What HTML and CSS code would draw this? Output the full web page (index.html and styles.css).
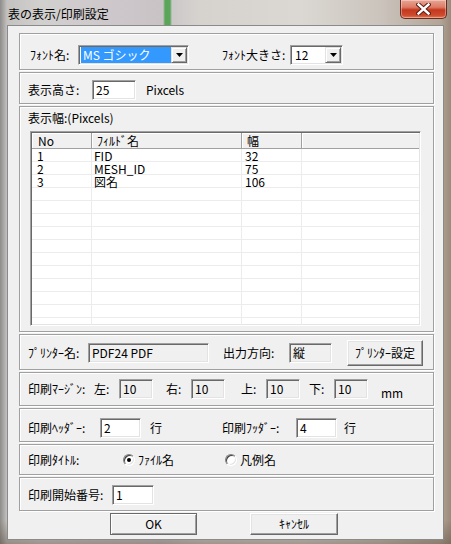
FILE: index.html
```html
<!DOCTYPE html>
<html lang="ja">
<head>
<meta charset="utf-8">
<title>表の表示/印刷設定</title>
<link rel="stylesheet" href="styles.css">
</head>
<body>
<div class="window">
  <div class="titlebar">
    <span class="title">表の表示/印刷設定</span>
    <div class="close">
      <svg width="15" height="12" viewBox="0 0 15 12"><path d="M2.5 1.5 L12.5 10.5 M12.5 1.5 L2.5 10.5" stroke="#5a1c14" stroke-width="4.4" stroke-linecap="square"/><path d="M2.5 1.5 L12.5 10.5 M12.5 1.5 L2.5 10.5" stroke="#fff" stroke-width="2.4" stroke-linecap="square"/></svg>
    </div>
  </div>
  <div class="client">
    <div class="grp g1">
      <span class="lbl w-font">ﾌｫﾝﾄ名:</span>
      <div class="combo w-combo1"><span class="ctext sel">MS ゴシック</span><span class="cbtn"><svg width="7" height="4" viewBox="0 0 7 4"><path d="M0 0H7L3.5 4Z" fill="#000"/></svg></span></div>
      <span class="lbl w-fsize">ﾌｫﾝﾄ大きさ:</span>
      <div class="combo w-combo2"><span class="ctext">12</span><span class="cbtn"><svg width="7" height="4" viewBox="0 0 7 4"><path d="M0 0H7L3.5 4Z" fill="#000"/></svg></span></div>
    </div>
    <div class="grp g2">
      <span class="lbl w-height">表示高さ:</span>
      <div class="edit w-h">25</div>
      <span class="unit">Pixcels</span>
    </div>
    <div class="grp g3">
      <span class="lbl">表示幅:(Pixcels)</span>
      <div class="list">
        <div class="lhead"><div class="c1">No</div><div class="c2">ﾌｨﾙﾄﾞ名</div><div class="c3">幅</div><div class="c4"></div></div>
        <div class="lrow"><div class="c1">1</div><div class="c2">FID</div><div class="c3">32</div><div class="c4"></div></div>
        <div class="lrow"><div class="c1">2</div><div class="c2">MESH_ID</div><div class="c3">75</div><div class="c4"></div></div>
        <div class="lrow"><div class="c1">3</div><div class="c2">図名</div><div class="c3">106</div><div class="c4"></div></div>
        <div class="lrow"><div class="c1"></div><div class="c2"></div><div class="c3"></div><div class="c4"></div></div>
        <div class="lrow"><div class="c1"></div><div class="c2"></div><div class="c3"></div><div class="c4"></div></div>
        <div class="lrow"><div class="c1"></div><div class="c2"></div><div class="c3"></div><div class="c4"></div></div>
        <div class="lrow"><div class="c1"></div><div class="c2"></div><div class="c3"></div><div class="c4"></div></div>
        <div class="lrow"><div class="c1"></div><div class="c2"></div><div class="c3"></div><div class="c4"></div></div>
        <div class="lrow"><div class="c1"></div><div class="c2"></div><div class="c3"></div><div class="c4"></div></div>
        <div class="lrow"><div class="c1"></div><div class="c2"></div><div class="c3"></div><div class="c4"></div></div>
        <div class="lrow"><div class="c1"></div><div class="c2"></div><div class="c3"></div><div class="c4"></div></div>
        <div class="lrow"><div class="c1"></div><div class="c2"></div><div class="c3"></div><div class="c4"></div></div>
        <div class="lrow"><div class="c1"></div><div class="c2"></div><div class="c3"></div><div class="c4"></div></div>
        <div class="lrow"><div class="c1"></div><div class="c2"></div><div class="c3"></div><div class="c4"></div></div>
      </div>
    </div>
    <div class="grp g4">
      <span class="lbl w-pname">ﾌﾟﾘﾝﾀｰ名:</span>
      <div class="edit ro w-pn">PDF24 PDF</div>
      <span class="lbl w-dir">出力方向:</span>
      <div class="edit ro w-dr">縦</div>
      <button class="btn btn-printer">ﾌﾟﾘﾝﾀｰ設定</button>
    </div>
    <div class="grp g5">
      <span class="lbl w-margin">印刷ﾏｰｼﾞﾝ:</span>
      <span class="lbl w-side">左:</span>
      <div class="edit ro w-m">10</div>
      <span class="lbl w-side m-r">右:</span>
      <div class="edit ro w-m">10</div>
      <span class="lbl w-side m-t">上:</span>
      <div class="edit ro w-m">10</div>
      <span class="lbl w-side m-b">下:</span>
      <div class="edit ro w-m">10</div>
      <span class="mm">mm</span>
    </div>
    <div class="grp g6">
      <span class="lbl w-hdr">印刷ﾍｯﾀﾞｰ:</span>
      <div class="edit w-hf">2</div>
      <span class="lbl w-gyo">行</span>
      <span class="lbl w-ftr">印刷ﾌｯﾀﾞｰ:</span>
      <div class="edit w-hf">4</div>
      <span class="lbl gyo2">行</span>
    </div>
    <div class="grp g7">
      <span class="lbl w-ttl">印刷ﾀｲﾄﾙ:</span>
      <span class="radio on"></span>
      <span class="rlbl w-r1">ﾌｧｲﾙ名</span>
      <span class="radio"></span>
      <span class="rlbl">凡例名</span>
    </div>
    <div class="grp g8">
      <span class="lbl w-start">印刷開始番号:</span>
      <div class="edit w-st">1</div>
    </div>
    <div class="buttons">
      <button class="btn btn-ok">OK</button>
      <button class="btn btn-cancel">ｷｬﾝｾﾙ</button>
    </div>
  </div>
</div>
</body>
</html>
```
FILE: styles.css
```css
* { box-sizing: border-box; }
html, body { margin: 0; padding: 0; }
body {
  width: 451px;
  height: 544px;
  overflow: hidden;
  font-family: "Noto Sans CJK JP", "Noto Sans", sans-serif;
  font-size: 12px;
  color: #000;
}
.window {
  width: 451px;
  height: 544px;
  display: flex;
  flex-direction: column;
  background:
    linear-gradient(180deg, rgba(0,0,0,0) 0, rgba(0,0,0,0) 520px, rgba(90,75,60,0.45) 544px),
    linear-gradient(90deg, #8e8c8a 0, #c4c2c0 7px, #d2d0cf 40px, #cdc6ca 120px, #c9c3c6 160px, #d6d3cf 200px, #dbd8d3 300px, #cbc4bd 380px, #b3a597 440px, #9a8a7c 451px);
}
.titlebar {
  height: 25px;
  flex: none;
  display: flex;
  justify-content: space-between;
  align-items: flex-start;
  padding-left: 8px;
  background: linear-gradient(90deg, rgba(0,0,0,0) 163px, rgba(70,160,70,0.85) 165px, rgba(70,160,70,0.85) 170px, rgba(0,0,0,0) 172px);
}
.title {
  line-height: 27px;
  font-size: 12px;
  color: #000;
}
.close {
  width: 47px;
  height: 19px;
  margin-right: 4px;
  border: 1px solid #6a2a22;
  border-top: none;
  border-radius: 0 0 5px 5px;
  background: linear-gradient(180deg, #e9a595 0, #dd7b64 40%, #c3381f 55%, #cf4a2d 85%, #e07a55 100%);
  box-shadow: inset 0 0 0 1px rgba(255,255,255,0.35);
  display: flex;
  align-items: center;
  justify-content: center;
}
.client {
  margin-left: 7px;
  width: 437px;
  height: 515px;
  flex: none;
  background: #f0f0f0;
  border: 1px solid #8a8a8a;
  padding: 7px 0 0 11px;
  display: flex;
  flex-direction: column;
}
.grp {
  width: 415px;
  flex: none;
  border: 1px solid #a0a0a0;
  box-shadow: inset 1px 1px 0 #fff, 1px 1px 0 #fff;
  margin-bottom: 2px;
  display: flex;
  align-items: center;
  padding-left: 8px;
}
.lbl, .unit, .mm, .rlbl {
  flex: none;
  line-height: 14px;
  white-space: nowrap;
}
.g1 { height: 37px; padding-top: 7px; padding-left: 10px; }
.g2 { height: 32px; padding-top: 4px; }
.g3 { height: 226px; flex-direction: column; align-items: flex-start; padding-top: 4px; }
.g4 { height: 36px; padding-top: 2px; }
.g5 { height: 34px; padding-top: 0; }
.g6 { height: 34px; padding-top: 5px; }
.g7 { height: 31px; padding-top: 0; }
.g8 { height: 34px; padding-top: 1px; }

.w-font { width: 48px; }
.w-fsize { width: 68px; margin-left: 33px; }
.w-height { width: 64px; }
.unit { margin-left: 10px; }
.w-pname { width: 60px; }
.w-dir { width: 66px; margin-left: 14px; }
.w-margin { width: 66px; }
.w-side { width: 25px; }
.m-r { margin-left: 13px; }
.m-t { margin-left: 16px; }
.m-b { margin-left: 9px; }
.mm { margin-left: 13px; margin-top: 8px; }
.w-hdr { width: 72px; }
.w-gyo { width: 12px; margin-left: 9px; }
.w-ftr { width: 74px; margin-left: 60px; }
.gyo2 { margin-left: 7px; }
.w-ttl { width: 95px; }
.w-r1 { width: 87px; }
.w-start { width: 84px; }

.combo, .edit {
  flex: none;
  height: 20px;
  border: 1px solid;
  border-color: #a0a0a0 #fff #fff #a0a0a0;
  box-shadow: inset 1px 1px 0 #696969, inset -1px -1px 0 #e3e3e3;
  background: #fff;
}
.combo { display: flex; padding: 1px 1px 1px 2px; }
.w-combo1 { width: 111px; }
.w-combo2 { width: 53px; }
.ctext {
  flex: 1;
  line-height: 16px;
  padding-left: 2px;
  white-space: nowrap;
}
.ctext.sel { background: #3399ff; color: #fff; }
.cbtn {
  flex: none;
  width: 16px;
  height: 16px;
  background: #f0f0f0;
  border: 1px solid;
  border-color: #e3e3e3 #696969 #696969 #e3e3e3;
  box-shadow: inset 1px 1px 0 #fff, inset -1px -1px 0 #a0a0a0;
  display: flex;
  align-items: center;
  justify-content: center;
}
.edit {
  line-height: 16px;
  padding: 1px 0 0 3px;
  white-space: nowrap;
}
.edit.ro { background: #f0f0f0; }
.w-h { width: 44px; }
.w-pn { width: 121px; }
.w-dr { width: 43px; }
.w-m { width: 34px; }
.w-hf { width: 41px; }
.w-st { width: 42px; }

.list {
  margin: 6px 0 0 2px;
  width: 391px;
  height: 195px;
  flex: none;
  border: 1px solid;
  border-color: #a0a0a0 #fff #fff #a0a0a0;
  box-shadow: inset 1px 1px 0 #696969, inset -1px -1px 0 #e3e3e3;
  background: #fff;
  padding: 1px;
  overflow: hidden;
  display: flex;
  flex-direction: column;
}
.lhead, .lrow { display: flex; flex: none; }
.lhead {
  height: 16px;
  background: #f0f0f0;
  border-bottom: 1px solid #a0a0a0;
}
.lhead > div {
  line-height: 15px;
  border-right: 1px solid #a0a0a0;
  box-shadow: inset 1px 1px 0 #fff;
  white-space: nowrap;
}
.lrow {
  height: 13px;
  background: linear-gradient(180deg, rgba(0,0,0,0) 12px, #ececec 12px);
}
.lrow > div {
  height: 13px;
  line-height: 13px;
  white-space: nowrap;
  background: linear-gradient(90deg, rgba(0,0,0,0) calc(100% - 1px), #ececec calc(100% - 1px));
}
.lrow > .c4 { background: none; }
.c1 { width: 60px; }
.c2 { width: 150px; }
.c3 { width: 60px; }
.c4 { flex: 1; border-right: none !important; }
.lhead .c1 { padding-left: 6px; }
.lhead .c2, .lhead .c3 { padding-left: 5px; }
.lrow .c1 { padding-left: 5px; }
.lrow .c2 { padding-left: 2px; }
.lrow .c3 { padding-left: 3px; }

.radio {
  flex: none;
  width: 12px;
  height: 12px;
  border-radius: 50%;
  border: 1px solid;
  border-color: #808080 #fff #fff #808080;
  box-shadow: inset 1px 1px 0 #404040, inset -1px -1px 0 #e3e3e3;
  background: #fff;
  display: flex;
  align-items: center;
  justify-content: center;
}
.radio.on::after {
  content: "";
  width: 4px;
  height: 4px;
  border-radius: 50%;
  background: #000;
}
.rlbl { margin-left: 3px; }

.btn {
  flex: none;
  font-family: inherit;
  font-size: 12px;
  color: #000;
  background: #f0f0f0;
  border: 1px solid;
  border-color: #fff #696969 #696969 #fff;
  box-shadow: inset -1px -1px 0 #a0a0a0, inset 1px 1px 0 #e3e3e3;
  padding: 0;
  line-height: 14px;
}
.btn-printer { width: 76px; height: 26px; margin-left: 15px; }
.buttons { display: flex; margin-top: 0; }
.btn-ok { width: 87px; height: 22px; margin-left: 91px; border-color: #696969; box-shadow: inset 1px 1px 0 #fff, inset -1px -1px 0 #a0a0a0; }
.btn-cancel { width: 88px; height: 22px; margin-left: 53px; }
```
